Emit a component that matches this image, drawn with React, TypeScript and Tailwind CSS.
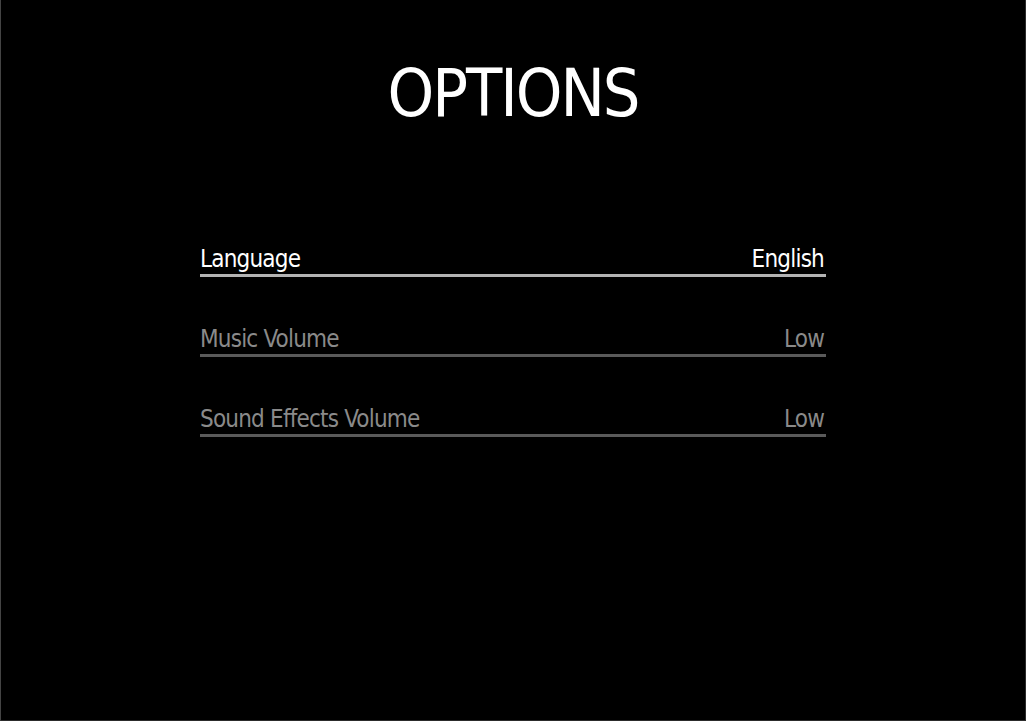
import React, { useState } from "react";

type Option = {
  label: string;
  value: string;
};

const OPTIONS: Option[] = [
  { label: "Language", value: "English" },
  { label: "Music Volume", value: "Low" },
  { label: "Sound Effects Volume", value: "Low" },
];

const font = {
  fontFamily: '"DejaVu Sans Condensed", "DejaVu Sans", sans-serif',
};

const OptionRow: React.FC<{ option: Option; active: boolean }> = ({ option, active }) => (
  <div className="flex flex-col">
    <div
      className={`flex h-6 items-start justify-between pt-[1px] text-[24px] leading-none tracking-[-0.8px] ${
        active ? "text-white" : "text-[#8a8a8a]"
      }`}
    >
      <span>{option.label}</span>
      <span className="pr-[2px]">{option.value}</span>
    </div>
    <div className={`mt-[4px] h-[3px] w-full ${active ? "bg-[#b3b3b3]" : "bg-[#5a5a5a]"}`} />
  </div>
);

const App: React.FC = () => {
  const [selected] = useState(0);

  return (
    <div
      className="h-screen w-full overflow-hidden border-b border-r border-l border-b-[#2c2c2c] border-r-[#2c2c2c] border-l-[#444444] bg-black"
      style={font}
    >
      {/* Title */}
      <h1 className="pt-[61px] text-center text-[66px] leading-none tracking-[-2px] text-white">
        OPTIONS
      </h1>

      {/* Settings list */}
      <div className="mx-auto mt-[119px] flex w-[626px] flex-col gap-[49px]">
        {OPTIONS.map((opt, i) => (
          <OptionRow key={opt.label} option={opt} active={i === selected} />
        ))}
      </div>
    </div>
  );
};

export default App;
